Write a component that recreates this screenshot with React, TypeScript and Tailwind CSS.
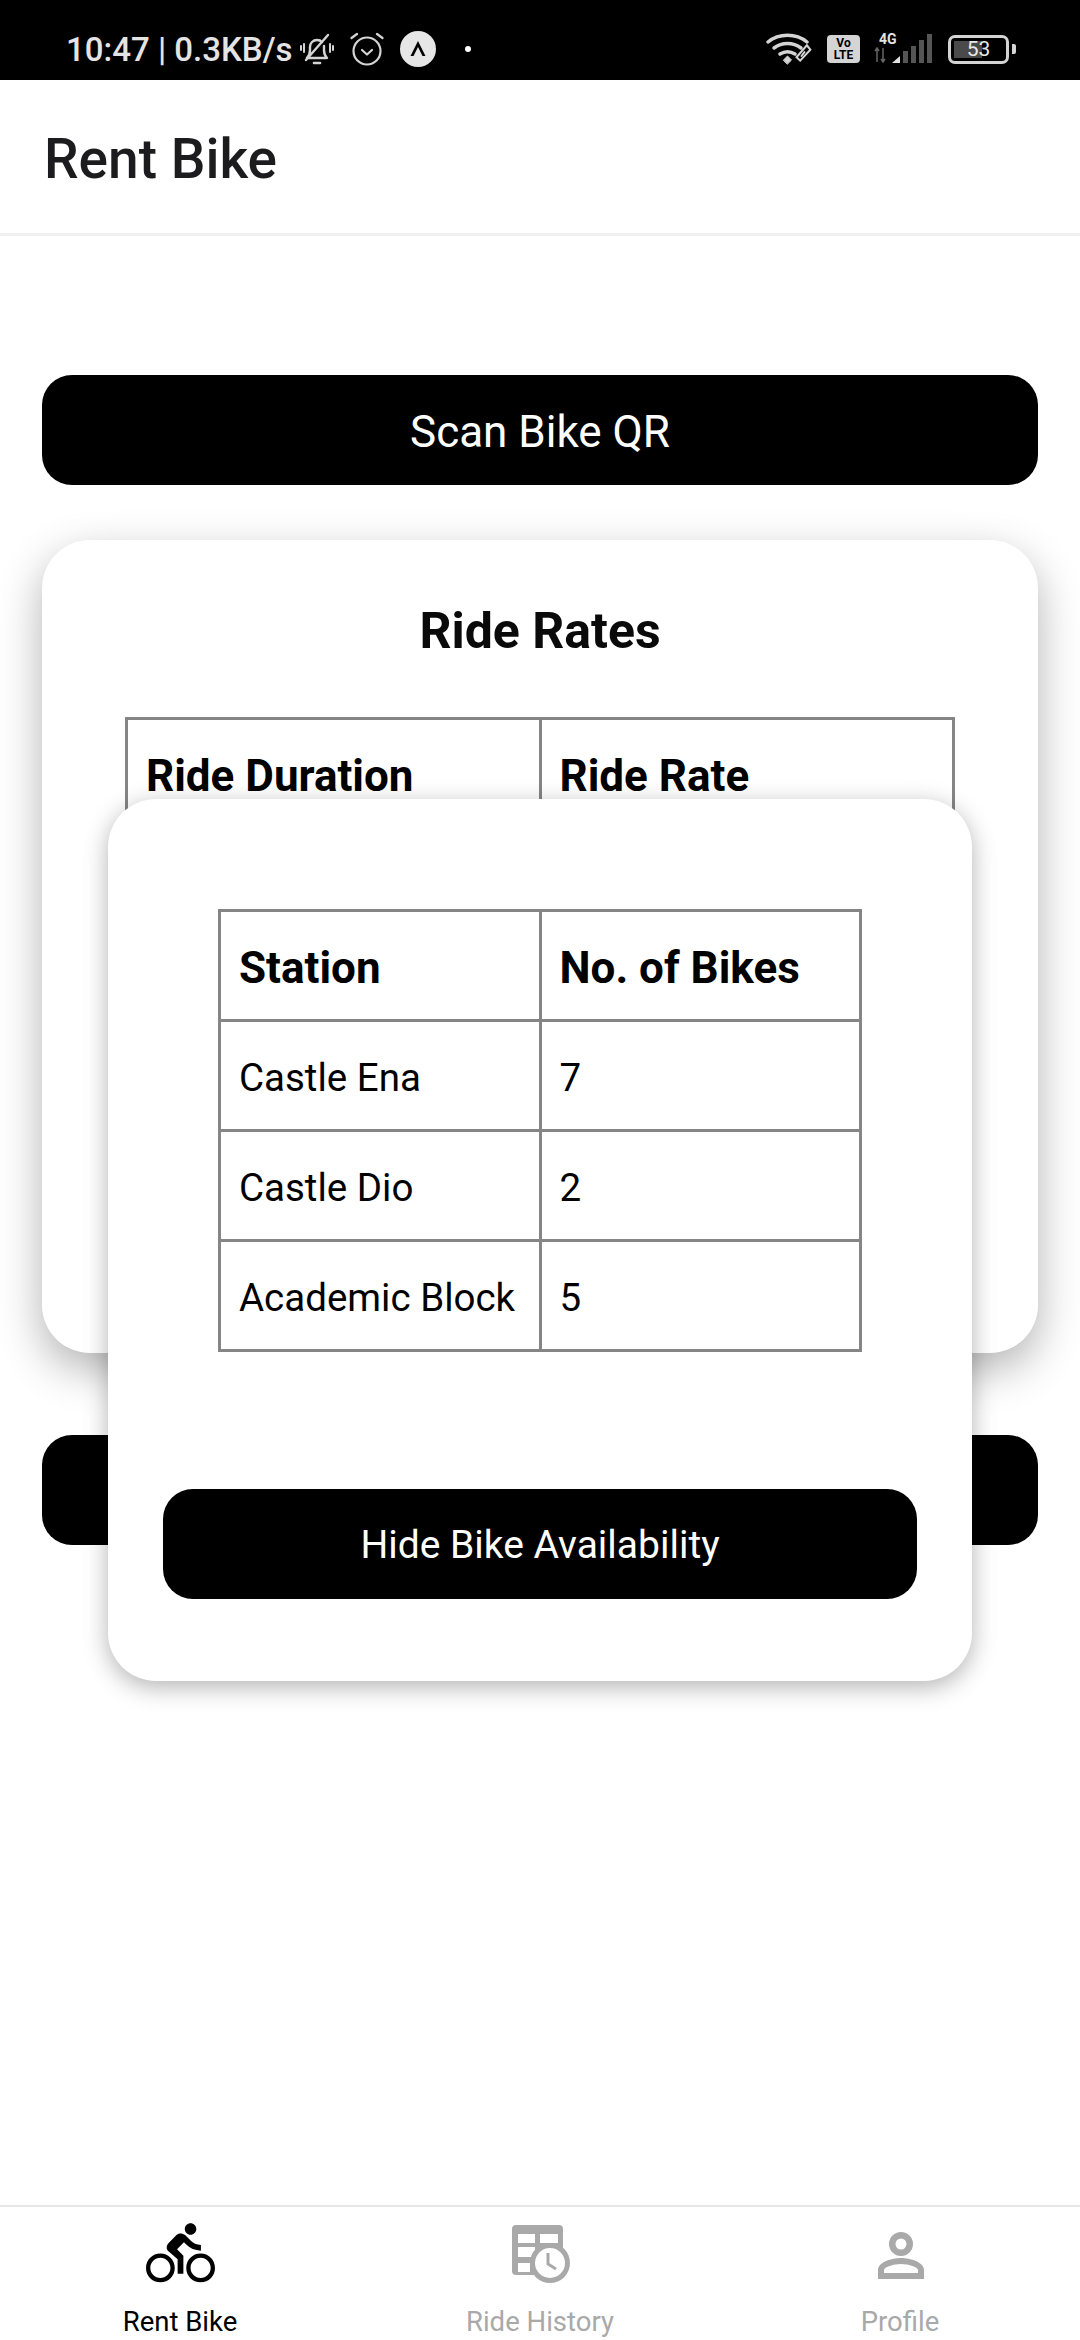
import { MdDirectionsBike } from "react-icons/md";

const stations = [
	{ name: "Castle Ena", bikes: 7 },
	{ name: "Castle Dio", bikes: 2 },
	{ name: "Academic Block", bikes: 5 },
];

const cellClass = "border-[3px] border-[#858585] pl-[18px] pr-0 pt-[5px] h-[110px] text-left whitespace-nowrap";
const headClass = "border-[3px] border-[#858585] pl-[18px] pr-0 pt-[5px] h-[110px] text-left whitespace-nowrap text-[44px] font-bold";

function BellOffIcon() {
	return (
		<svg width="34" height="34" viewBox="0 0 34 34" fill="none" stroke="#d4d4d4" strokeWidth="2.4" strokeLinecap="round" strokeLinejoin="round">
			<path d="M7 26c2-2 3-4 3-8v-3c0-4 3-7 7-7 2 0 4 .8 5 2" />
			<path d="M24 14v4c0 4 1 6 3 8H7" />
			<path d="M28 3L6 28" />
			<path d="M14 31h6" strokeWidth="2.6" />
			<path d="M4 12v8M1 14v4M30 12v8M33 14v4" strokeWidth="2" />
		</svg>
	);
}

function AlarmIcon() {
	return (
		<svg width="34" height="34" viewBox="0 0 34 34" fill="none" stroke="#d4d4d4" strokeWidth="2.2" strokeLinecap="round" strokeLinejoin="round">
			<circle cx="17" cy="19" r="13.500" />
			<path d="M12 18l5 4.500 5-4.500" />
			<path d="M1.500 6L7 2M32.500 6L27 2" />
		</svg>
	);
}

function ExpoIcon() {
	return (
		<svg width="36" height="36" viewBox="0 0 36 36">
			<circle cx="18" cy="18" r="18" fill="#e6e6e6" />
			<path d="M18 10l-7.500 15h3L18 16l4.500 9h3z" fill="#000" />
		</svg>
	);
}

function WifiIcon() {
	return (
		<svg width="48" height="32" viewBox="0 0 48 32" fill="none" stroke="#d4d4d4" strokeLinecap="round">
			<path d="M2 9c11-9 28-9 39 0" strokeWidth="3.500" />
			<path d="M8 15c8-6 19-6 27 0" strokeWidth="3.500" />
			<path d="M14 21c5-3 10-3 15 0" strokeWidth="3.500" />
			<path d="M17.500 27l4-4 4 4-4 4z" fill="#d4d4d4" strokeWidth="1" />
			<path d="M40 12l4 4-9 12-4-3z" strokeWidth="2" transform="rotate(6 38 20)" />
			<path d="M38.500 19l-3 4" strokeWidth="2" />
		</svg>
	);
}

function SignalIcon() {
	return (
		<svg width="58" height="30" viewBox="0 0 58 30">
			<path d="M3 14v14M1 17l2-3 2 3M9 14v14M7 25l2 3 2-3" fill="none" stroke="#666" strokeWidth="1.500" />
			<path d="M18 29l8-7v7z" fill="#e0e0e0" />
			<rect x="29" y="17" width="5" height="12" fill="#555" />
			<rect x="37" y="12" width="5" height="17" fill="#555" />
			<rect x="45" y="6" width="5" height="23" fill="#555" />
			<rect x="53" y="0" width="5" height="29" fill="#555" />
		</svg>
	);
}

function HistoryIcon() {
	return (
		<svg width="70" height="70" viewBox="0 0 70 70">
			<rect x="7" y="6" width="51" height="50" rx="4" fill="#a9a9a9" />
			<path d="M13 15h17v9H13zM35 15h18v9H35zM13 28h17v10H13zM13 44h12v9H13z" fill="#fff" />
			<circle cx="45" cy="44" r="20" fill="#a9a9a9" />
			<circle cx="45" cy="44" r="15" fill="#fff" />
			<path d="M43 34v11l8 5" fill="none" stroke="#a9a9a9" strokeWidth="3" />
		</svg>
	);
}

function ProfileIcon() {
	return (
		<svg width="70" height="70" viewBox="0 0 70 70" fill="#a9a9a9" fillRule="evenodd">
			<path d="M36 13a12 12 0 1 0 0 24 12 12 0 0 0 0-24zm0 6.500a5.500 5.500 0 1 1 0 11 5.500 5.500 0 0 1 0-11z" />
			<path d="M13 60v-9c0-8 14-12 23-12s23 4 23 12v9zM19 54h34v-3c0-3-10-6-17-6s-17 3-17 6z" />
		</svg>
	);
}

export default function App() {
	return (
		<div className="relative flex flex-col h-[2340px] w-[1080px] overflow-hidden bg-white font-['Roboto',sans-serif]">
			{/* status bar */}
			<div className="flex items-center justify-between h-[80px] bg-black pl-[66px] pr-[64px] pt-[18px] text-[#e4e4e4]">
				<div className="flex items-center">
					<span className="text-[33px] font-medium leading-none w-[234px] whitespace-nowrap">10:47 | 0.3KB/s</span>
					<BellOffIcon />
					<span className="ml-[16px]"><AlarmIcon /></span>
					<span className="ml-[16px]"><ExpoIcon /></span>
					<span className="ml-[29px] w-[6px] h-[6px] rounded-full bg-white" />
				</div>
				<div className="flex items-center">
					<WifiIcon />
					<div className="ml-[13px] flex flex-col items-center justify-center w-[33px] h-[28px] rounded-[4px] bg-[#d4d4d4] text-black text-[12px] font-bold leading-[12px]">
						<span>Vo</span>
						<span>LTE</span>
					</div>
					<div className="relative ml-[14px] w-[58px] h-[30px]">
						<SignalIcon />
						<span className="absolute left-[5px] top-[-2px] text-[14px] font-bold leading-none text-[#e4e4e4]">4G</span>
					</div>
					<div className="relative ml-[16px] flex items-center justify-center w-[61px] h-[29px] rounded-[7px] border-[3px] border-[#d4d4d4] overflow-hidden">
						<div className="absolute left-[3px] top-[3px] bottom-[3px] w-[28px] bg-[#4a4a4a]" />
						<span className="relative text-[21px] leading-none text-[#e8e8e8]">53</span>
					</div>
					<div className="ml-[3px] w-[4px] h-[10px] rounded-r-[2px] bg-[#d4d4d4]" />
				</div>
			</div>

			{/* header */}
			<div className="flex items-center h-[156px] pl-[44px] pt-[5px] border-b-[3px] border-[#f0f0f0] text-[55px] font-medium text-[#1c1c1e]">
				Rent Bike
			</div>

			<div className="flex-1 px-[42px] pt-[139px]">
				<button className="flex items-center justify-center w-full h-[110px] pt-[4px] rounded-[30px] bg-black text-white text-[44px]">
					Scan Bike QR
				</button>

				<div className="mt-[55px] h-[813px] rounded-[48px] bg-white px-[83px] pt-[61px] shadow-[0_16px_44px_rgba(0,0,0,0.3)]">
					<h2 className="text-center text-[50px] leading-[60px] font-bold text-[#0a0a0a]">Ride Rates</h2>
					<table className="mt-[56px] w-full border-collapse table-fixed text-black">
						<thead>
							<tr>
								<th className={headClass}>Ride Duration</th>
								<th className={headClass}>Ride Rate</th>
							</tr>
						</thead>
					</table>
				</div>

				<button className="block mt-[82px] w-full h-[110px] rounded-[30px] bg-black" />
			</div>

			{/* bottom tabs */}
			<div className="grid grid-cols-3 h-[135px] border-t-[2px] border-[#e6e6e6]">
				<div className="flex flex-col items-center pt-[12px] text-black">
					<MdDirectionsBike size={69} />
					<span className="mt-[18px] text-[27.5px] leading-[32px]">Rent Bike</span>
				</div>
				<div className="flex flex-col items-center pt-[12px] text-[#a9a9a9]">
					<HistoryIcon />
					<span className="mt-[17px] text-[27.5px] leading-[32px]">Ride History</span>
				</div>
				<div className="flex flex-col items-center pt-[12px] text-[#a9a9a9]">
					<ProfileIcon />
					<span className="mt-[17px] text-[27.5px] leading-[32px]">Profile</span>
				</div>
			</div>

			{/* bike availability popup */}
			<div className="absolute left-[108px] top-[799px] flex flex-col items-center w-[864px] h-[882px] rounded-[48px] bg-white pt-[110px] shadow-[0_6px_24px_rgba(0,0,0,0.3)]">
				<table className="w-[644px] border-collapse table-fixed text-[38.5px] text-black">
					<thead>
						<tr>
							<th className={headClass}>Station</th>
							<th className={headClass}>No. of Bikes</th>
						</tr>
					</thead>
					<tbody>
						{stations.map((s) => (
							<tr key={s.name}>
								<td className={cellClass}>{s.name}</td>
								<td className={cellClass}>{s.bikes}</td>
							</tr>
						))}
					</tbody>
				</table>
				<button className="mt-[137px] w-[754px] h-[110px] pt-[2px] rounded-[30px] bg-black text-white text-[39px]">
					Hide Bike Availability
				</button>
			</div>
		</div>
	);
}
